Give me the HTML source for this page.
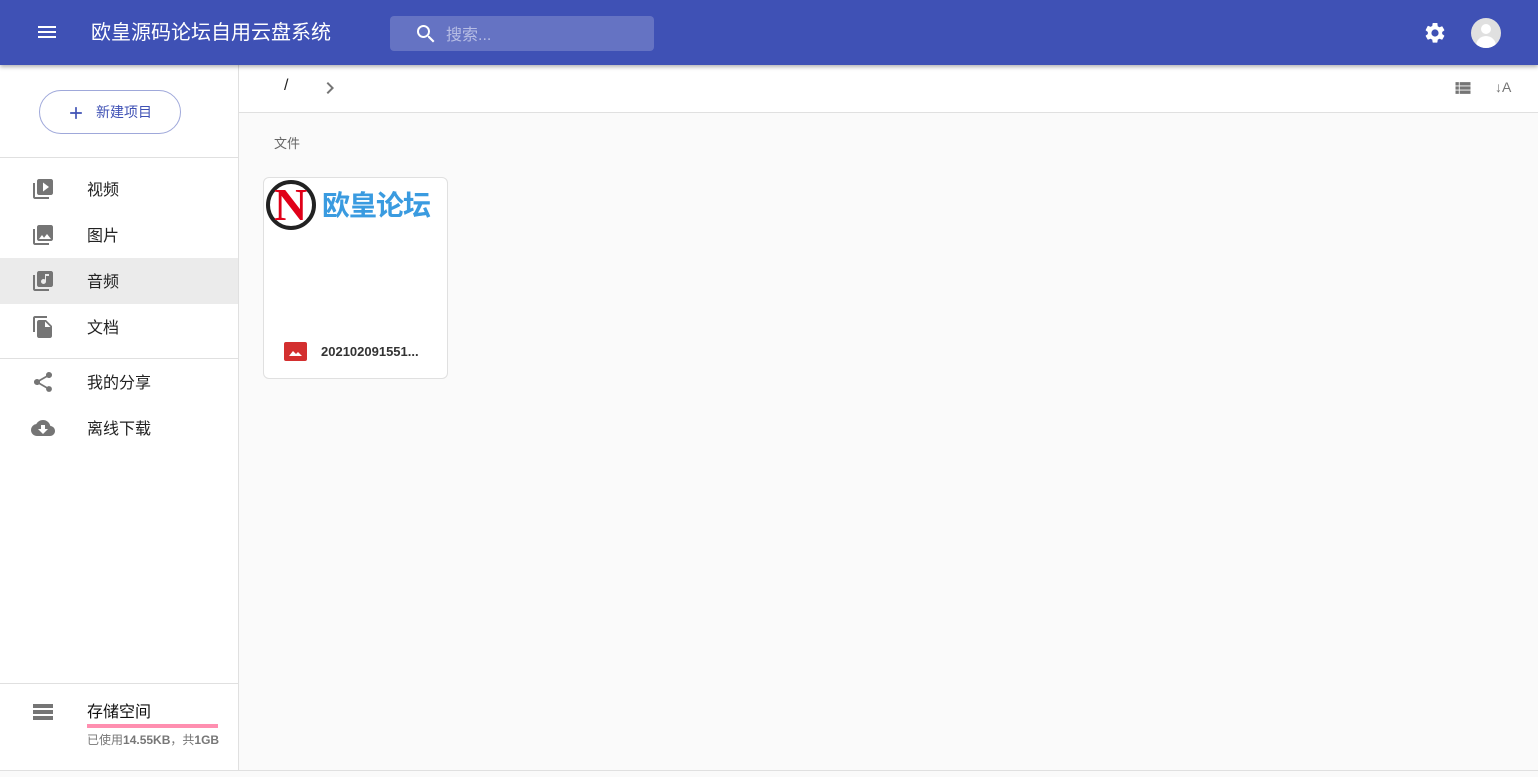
<!DOCTYPE html>
<html><head><meta charset="utf-8"><style>
*{margin:0;padding:0;box-sizing:border-box}
body{width:1538px;height:777px;overflow:hidden;background:#fafafa;font-family:"Liberation Sans","Noto Sans CJK SC",sans-serif;position:relative}
.hdr{position:absolute;left:0;top:0;width:1538px;height:65px;background:#3f51b5;box-shadow:0 2px 4px rgba(0,0,0,.3);z-index:3}
.title{position:absolute;left:91px;top:20px;color:#fff;font-size:20px;line-height:26px}
.search{position:absolute;left:390px;top:16px;width:264px;height:35px;background:#6573c3;border-radius:4px}
.search span{position:absolute;left:56px;top:5px;color:#b7bde4;font-size:16px}
.side{position:absolute;left:0;top:65px;width:239px;height:706px;background:#fff;border-right:1px solid #e0e0e0}
.btn{position:absolute;left:39px;top:25px;width:142px;height:44px;border:1px solid #9fa8da;border-radius:22px;color:#3f51b5;font-size:14px}
.btn span{position:absolute;left:56px;top:11px}
.item{position:absolute;left:0;width:238px;height:46px;font-size:16px;color:#222}
.item span{position:absolute;left:87px;top:10px}
.item svg{position:absolute;left:31px;top:11px}
.hr{position:absolute;left:0;width:238px;height:1px;background:#e0e0e0}
.bar{position:absolute;left:239px;top:65px;width:1299px;height:48px;background:#fff;border-bottom:1px solid #e0e0e0}
.card{position:absolute;left:263px;top:177px;width:185px;height:202px;background:#fff;border:1px solid #e0e0e0;border-radius:6px;overflow:hidden}
</style></head><body>
<div class="hdr">
<svg style="position:absolute;left:35px;top:20px" width="24" height="24" viewBox="0 0 24 24"><path fill="#fff" d="M3 18h18v-2H3v2zm0-5h18v-2H3v2zm0-7v2h18V6H3z"/></svg>
<div class="title">欧皇源码论坛自用云盘系统</div>
<div class="search"><svg style="position:absolute;left:24px;top:6px" width="24" height="24" viewBox="0 0 24 24"><path fill="#fff" d="M15.5 14h-.79l-.28-.27A6.470 6.470 0 0 0 16 9.5 6.5 6.5 0 1 0 9.5 16c1.61 0 3.09-.59 4.23-1.57l.27.28v.79l5 4.99L20.490 19l-4.99-5zm-6 0C7.01 14 5 11.99 5 9.5S7.01 5 9.5 5 14 7.01 14 9.5 11.99 14 9.5 14z"/></svg><span>搜索...</span></div>
<svg style="position:absolute;left:1423px;top:21px" width="24" height="24" viewBox="0 0 24 24"><path fill="#fff" d="M19.14 12.94a7.1 7.1 0 0 0 0-1.88l2.03-1.58a.49.49 0 0 0 .12-.61l-1.92-3.32a.49.49 0 0 0-.59-.22l-2.39.96a7 7 0 0 0-1.62-.94l-.36-2.54A.48.48 0 0 0 13.93 2h-3.84a.48.48 0 0 0-.48.41l-.36 2.54c-.59.24-1.13.57-1.62.94l-2.39-.96a.48.48 0 0 0-.59.22L2.73 8.87a.48.48 0 0 0 .12.61l2.03 1.58a7 7 0 0 0 0 1.88l-2.03 1.58a.49.49 0 0 0-.12.61l1.92 3.32c.12.22.37.29.59.22l2.39-.96c.5.38 1.03.7 1.62.94l.36 2.54c.05.24.24.41.48.41h3.84c.24 0 .44-.17.47-.41l.36-2.54c.59-.24 1.13-.56 1.62-.94l2.39.96c.22.08.47 0 .59-.22l1.92-3.32a.48.48 0 0 0-.12-.61l-2.01-1.58zM12 15.6A3.6 3.6 0 1 1 12 8.4a3.6 3.6 0 0 1 0 7.2z"/></svg>
<div style="position:absolute;left:1471px;top:18px;width:30px;height:30px;border-radius:50%;background:#e0e0e0;overflow:hidden"><div style="position:absolute;left:10px;top:6px;width:10px;height:10px;border-radius:50%;background:#fff"></div><div style="position:absolute;left:5px;top:18px;width:20px;height:16px;border-radius:10px 10px 0 0;background:#fff"></div></div>
</div>
<div class="side">
<div class="btn"><svg style="position:absolute;left:26px;top:12px" width="20" height="20" viewBox="0 0 24 24"><path fill="#3f51b5" d="M19 13h-6v6h-2v-6H5v-2h6V5h2v6h6v2z"/></svg><span>新建项目</span></div>
<div class="hr" style="top:92px"></div>
<div class="item" style="top:101px"><svg width="24" height="24" viewBox="0 0 24 24"><path fill="#757575" d="M4 6H2v14c0 1.1.9 2 2 2h14v-2H4V6zm16-4H8c-1.1 0-2 .9-2 2v12c0 1.1.9 2 2 2h12c1.1 0 2-.9 2-2V4c0-1.1-.9-2-2-2zm-8 12.5v-9l6 4.5-6 4.5z"/></svg><span>视频</span></div>
<div class="item" style="top:147px"><svg width="24" height="24" viewBox="0 0 24 24"><path fill="#757575" d="M22 16V4c0-1.1-.9-2-2-2H8c-1.1 0-2 .9-2 2v12c0 1.1.9 2 2 2h12c1.1 0 2-.9 2-2zm-11-4l2.03 2.71L16 11l4 5H8l3-4zM2 6v14c0 1.1.9 2 2 2h14v-2H4V6H2z"/></svg><span>图片</span></div>
<div class="item" style="top:193px;background:#ebebeb"><svg width="24" height="24" viewBox="0 0 24 24"><path fill="#757575" d="M20 2H8c-1.1 0-2 .9-2 2v12c0 1.1.9 2 2 2h12c1.1 0 2-.9 2-2V4c0-1.1-.9-2-2-2zm-2 5h-3v5.5a2.5 2.5 0 1 1-2.5-2.5c.57 0 1.08.19 1.5.51V5h4v2zM4 6H2v14c0 1.1.9 2 2 2h14v-2H4V6z"/></svg><span>音频</span></div>
<div class="item" style="top:239px"><svg width="24" height="24" viewBox="0 0 24 24"><path fill="#757575" d="M16 1H4c-1.1 0-2 .9-2 2v14h2V3h12V1zm-1 4l6 6v10c0 1.1-.9 2-2 2H7.990C6.890 23 6 22.1 6 21l.01-14c0-1.1.89-2 1.99-2h7zm-1 7h5.5L14 6.5V12z"/></svg><span>文档</span></div>
<div class="hr" style="top:293px"></div>
<div class="item" style="top:294px"><svg width="24" height="24" viewBox="0 0 24 24"><path fill="#757575" d="M18 16.08c-.76 0-1.44.3-1.96.77L8.91 12.7c.05-.23.09-.46.09-.7s-.04-.47-.09-.7l7.05-4.11A2.99 2.99 0 0 0 21 5a3 3 0 1 0-5.91.7L8.04 9.81A3 3 0 1 0 6 15c.79 0 1.5-.31 2.04-.81l7.12 4.16c-.05.21-.08.43-.08.65A2.92 2.92 0 1 0 18 16.08z"/></svg><span>我的分享</span></div>
<div class="item" style="top:340px"><svg width="24" height="24" viewBox="0 0 24 24"><path fill="#757575" d="M19.35 10.04A7.49 7.49 0 0 0 12 4C9.11 4 6.6 5.64 5.35 8.04A5.994 5.994 0 0 0 0 14c0 3.31 2.69 6 6 6h13c2.76 0 5-2.24 5-5 0-2.64-2.05-4.78-4.65-4.96zM17 13l-5 5-5-5h3V9h4v4h3z"/></svg><span>离线下载</span></div>
<div class="hr" style="top:618px"></div>
<svg style="position:absolute;left:31px;top:635px" width="24" height="24" viewBox="0 0 24 24"><path fill="#757575" d="M2 20h20v-4H2v4zm0-16v4h20V4H2zm0 10h20v-4H2v4z"/></svg>
<div style="position:absolute;left:87px;top:633px;font-size:16px;color:#111">存储空间</div>
<div style="position:absolute;left:87px;top:659px;width:131px;height:4px;background:#ff8fb0"></div>
<div style="position:absolute;left:87px;top:666px;font-size:12px;color:#777">已使用<b>14.55KB</b>，共<b>1GB</b></div>
</div>
<div class="bar">
<div style="position:absolute;left:45px;top:12px;font-size:16px;color:#222">/</div>
<svg style="position:absolute;left:79px;top:11px" width="24" height="24" viewBox="0 0 24 24"><path fill="#757575" d="M10 6L8.59 7.41 13.17 12l-4.58 4.59L10 18l6-6z"/></svg>
<svg style="position:absolute;left:1214px;top:13px" width="20" height="20" viewBox="0 0 24 24"><path fill="#757575" d="M3 14h4v-4H3v4zm0 5h4v-4H3v4zM3 9h4V5H3v4zm5 5h13v-4H8v4zm0 5h13v-4H8v4zM8 5v4h13V5H8z"/></svg>
<div style="position:absolute;left:1256px;top:14px;font-size:14px;color:#757575">↓A</div>
</div>
<div style="position:absolute;left:274px;top:133px;font-size:13px;color:#666">文件</div>
<div class="card">
<div style="position:absolute;left:2px;top:2px;width:50px;height:50px;border-radius:50%;border:4px solid #222;background:#fff"></div>
<div style="position:absolute;left:10px;top:0px;color:#e00018;font:bold 46px/54px 'Liberation Serif',serif">N</div>
<div style="position:absolute;left:58px;top:8px;color:#3a9be0;font:bold 28px/36px 'Noto Sans CJK SC',sans-serif;letter-spacing:-1px">欧皇论坛</div>
<div style="position:absolute;left:20px;top:164px;width:23px;height:19px;background:#d32f2f;border-radius:2px"><svg style="position:absolute;left:4px;top:4px" width="15" height="11" viewBox="0 0 15 11"><path fill="#fff" d="M1 10l4-5 3 3 2-2 4 4z"/></svg></div>
<div style="position:absolute;left:57px;top:166px;font-size:13px;font-weight:bold;color:#333">202102091551...</div>
</div>
<div style="position:absolute;left:0;top:770px;width:1538px;height:1px;background:#e0e0e0"></div>
</body></html>
